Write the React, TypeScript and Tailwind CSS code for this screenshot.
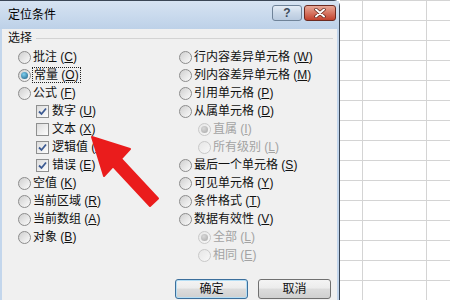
import React from 'react'

const font = "font-['Liberation_Sans','Noto_Sans_CJK_SC',sans-serif]"

function Radio({ checked = false, disabled = false }: { checked?: boolean; disabled?: boolean }) {
  return (
    <span
      className={`flex h-[13px] w-[13px] shrink-0 items-center justify-center rounded-full border ${
        disabled
          ? 'border-[#c9c9c9] bg-[linear-gradient(135deg,#e6e6e6,#f8f8f8)]'
          : 'border-[#8c8c8c] bg-[linear-gradient(135deg,#cfcfcf,#fbfbfb)]'
      }`}
    >
      {checked && (
        <span
          className={`h-[7px] w-[7px] rounded-full ${
            disabled
              ? 'bg-[radial-gradient(circle_at_40%_35%,#d8d8d8,#a9a9a9)]'
              : 'bg-[radial-gradient(circle_at_40%_35%,#7fd0f0,#1a5a80)]'
          }`}
        />
      )}
    </span>
  )
}

function Check({ checked = false }: { checked?: boolean }) {
  return (
    <span className="flex h-[13px] w-[13px] shrink-0 items-center justify-center border border-[#8e8f8f] bg-[linear-gradient(135deg,#dcdcdc,#fdfdfd)]">
      {checked && (
        <svg width="9" height="9" viewBox="0 0 9 9">
          <path d="M1 4.5 L3.5 7 L8 1.5" fill="none" stroke="#3c5a92" strokeWidth="1.8" />
        </svg>
      )}
    </span>
  )
}

function Label({ text, k, disabled = false, focus = false }: { text: string; k: string; disabled?: boolean; focus?: boolean }) {
  return (
    <span
      className={`whitespace-nowrap text-[12px] leading-[14px] ${disabled ? 'text-[#a3a3a3]' : 'text-[#111]'} ${
        focus ? 'outline outline-1 outline-dotted outline-[#222] outline-offset-0 px-[1px]' : ''
      }`}
    >
      {text} (<u>{k}</u>)
    </span>
  )
}

function RadioRow({ text, k, checked, disabled, focus, indent = false }: { text: string; k: string; checked?: boolean; disabled?: boolean; focus?: boolean; indent?: boolean }) {
  return (
    <div className={`flex h-[18px] items-center gap-[2px] ${indent ? 'pl-[19px]' : ''}`}>
      <Radio checked={checked} disabled={disabled} />
      <Label text={text} k={k} disabled={disabled} focus={focus} />
    </div>
  )
}

function CheckRow({ text, k, checked }: { text: string; k: string; checked?: boolean }) {
  return (
    <div className="flex h-[18px] items-center gap-[3px] pl-[18px]">
      <Check checked={checked} />
      <Label text={text} k={k} />
    </div>
  )
}

function Button({ children, primary = false }: { children: React.ReactNode; primary?: boolean }) {
  return (
    <div
      className={`flex h-[20px] w-[73px] items-center justify-center rounded-[3px] border bg-[linear-gradient(#f4f4f4,#ececec_45%,#dcdcdc_50%,#d0d0d0)] text-[12px] text-[#111] ${
        primary ? 'border-[#3c6f9c] shadow-[inset_0_0_0_1px_#b4def5]' : 'border-[#707070]'
      }`}
    >
      {children}
    </div>
  )
}

export default function App() {
  const rows = Array.from({ length: 15 })
  return (
    <div className={`relative flex h-[300px] w-[450px] overflow-hidden bg-white ${font}`}>
      {/* dialog */}
      <div className="flex h-full w-[340px] shrink-0 flex-col rounded-tr-[6px] border-r border-t border-[#3a4656] bg-[#c3d6ec]">
        <div className="flex h-[28px] items-start justify-between bg-[linear-gradient(#d6e3f2,#bdd1e8)] pl-[8px] pr-[3px] pt-[4px]">
          <span className="mt-[2px] text-[12px] leading-[16px] text-black">定位条件</span>
          <div className="flex gap-[2px]">
            <div className="flex h-[16px] w-[30px] items-center justify-center rounded-[3px] border border-[#6f8399] bg-[linear-gradient(#e4ecf6,#cad8e8_50%,#b9cadf)] text-[12px] font-bold leading-none text-[#3d4a5a]">
              ?
            </div>
            <div className="flex h-[16px] w-[32px] items-center justify-center rounded-[3px] border border-[#6b2a20] bg-[linear-gradient(#e8a897,#d67562_50%,#c2412d)]">
              <svg width="12" height="10" viewBox="0 0 12 10">
                <path d="M2 1.5 L10 8.5 M10 1.5 L2 8.5" stroke="#5a2218" strokeWidth="3.4" strokeLinecap="round" />
                <path d="M2 1.5 L10 8.5 M10 1.5 L2 8.5" stroke="#fff" strokeWidth="2" strokeLinecap="round" />
              </svg>
            </div>
          </div>
        </div>

        <div className="ml-[2px] mr-[2px] flex flex-1 flex-col bg-[#f0f0f0]">
          <div className="flex h-[18px] items-center pl-[6px] pr-[4px]">
            <span className="text-[12px] leading-[14px] text-[#111]">选择</span>
            <div className="ml-[4px] h-px flex-1 bg-[#d3d3d3]" />
          </div>

          <div className="mt-[1px] flex pl-[16px]">
            <div className="flex w-[161px] flex-col">
              <RadioRow text="批注" k="C" />
              <RadioRow text="常量" k="O" checked focus />
              <RadioRow text="公式" k="F" />
              <CheckRow text="数字" k="U" checked />
              <CheckRow text="文本" k="X" />
              <CheckRow text="逻辑值" k="G" checked />
              <CheckRow text="错误" k="E" checked />
              <RadioRow text="空值" k="K" />
              <RadioRow text="当前区域" k="R" />
              <RadioRow text="当前数组" k="A" />
              <RadioRow text="对象" k="B" />
            </div>
            <div className="flex flex-col">
              <RadioRow text="行内容差异单元格" k="W" />
              <RadioRow text="列内容差异单元格" k="M" />
              <RadioRow text="引用单元格" k="P" />
              <RadioRow text="从属单元格" k="D" />
              <RadioRow text="直属" k="I" indent checked disabled />
              <RadioRow text="所有级别" k="L" indent disabled />
              <RadioRow text="最后一个单元格" k="S" />
              <RadioRow text="可见单元格" k="Y" />
              <RadioRow text="条件格式" k="T" />
              <RadioRow text="数据有效性" k="V" />
              <RadioRow text="全部" k="L" indent checked disabled />
              <RadioRow text="相同" k="E" indent disabled />
            </div>
          </div>

          <div className="mt-[15px] flex justify-end gap-[10px] pr-[6px]">
            <Button primary>确定</Button>
            <Button>取消</Button>
          </div>
        </div>
      </div>

      {/* spreadsheet grid */}
      <div className="flex flex-1 flex-col">
        <div className="flex h-[19px] border-b border-[#d4d4d4]">
          <div className="w-[23px] border-r border-[#d4d4d4]" />
          <div className="w-[64px] border-r border-[#d4d4d4]" />
          <div className="flex-1" />
        </div>
        {rows.map((_, i) => (
          <div key={i} className="flex h-[20px] shrink-0 border-b border-[#d4d4d4]">
            <div className="w-[23px] border-r border-[#d4d4d4]" />
            <div className="w-[64px] border-r border-[#d4d4d4]" />
            <div className="flex-1" />
          </div>
        ))}
      </div>

      {/* red arrow annotation */}
      <svg className="pointer-events-none absolute left-0 top-0" width="450" height="300" viewBox="0 0 450 300">
        <polygon
          points="92,137 130,149 121,158.7 158,198.4 150,206 113,166.3 104,176"
          fill="#ea1c1c"
          stroke="#ea1c1c"
          strokeWidth="2"
          strokeLinejoin="round"
        />
      </svg>
    </div>
  )
}
